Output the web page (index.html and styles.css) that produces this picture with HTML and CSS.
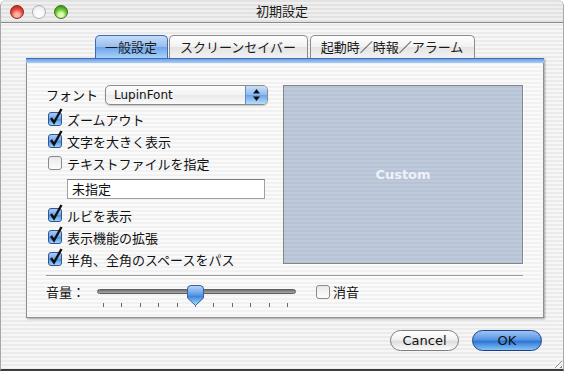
FILE: index.html
```html
<!DOCTYPE html>
<html lang="ja">
<head>
  <meta charset="UTF-8" />
  <title>初期設定</title>
  <link rel="stylesheet" href="styles.css">
</head>
<body>
  <div class="window">
    <div class="titlebar">
      <div class="lights">
        <span class="light close"></span>
        <span class="light mini"></span>
        <span class="light zoom"></span>
      </div>
      <div class="title">初期設定</div>
      <div></div>
    </div>

    <div class="content">
      <div class="tabs">
        <div class="tab tab-general active">一般設定</div>
        <div class="tab tab-saver">スクリーンセイバー</div>
        <div class="tab tab-alarm">起動時／時報／アラーム</div>
      </div>

      <div class="panel">
        <div class="panel-bar"></div>
        <div class="panel-body">
          <div class="panel-main">
            <div class="options">
              <div class="font-row">
                <span class="font-label">フォント</span>
                <div class="popup">
                  <span class="popup-text">LupinFont</span>
                  <span class="stepper">
                    <svg width="9" height="14" viewBox="0 0 9 14">
                      <path d="M4.5 1 L8 5.5 L1 5.5 Z" fill="#111"/>
                      <path d="M4.5 13 L8 8.5 L1 8.5 Z" fill="#111"/>
                    </svg>
                  </span>
                </div>
              </div>

              <label class="row"><span class="check on"><svg width="14" height="17" viewBox="0 0 14 17"><path d="M2 10 L5 14.5 L12.5 1" fill="none" stroke="#111" stroke-width="2.4"/></svg></span>ズームアウト</label>
              <label class="row"><span class="check on"><svg width="14" height="17" viewBox="0 0 14 17"><path d="M2 10 L5 14.5 L12.5 1" fill="none" stroke="#111" stroke-width="2.4"/></svg></span>文字を大きく表示</label>
              <label class="row"><span class="check"></span>テキストファイルを指定</label>

              <div class="field">未指定</div>

              <label class="row"><span class="check on"><svg width="14" height="17" viewBox="0 0 14 17"><path d="M2 10 L5 14.5 L12.5 1" fill="none" stroke="#111" stroke-width="2.4"/></svg></span>ルビを表示</label>
              <label class="row"><span class="check on"><svg width="14" height="17" viewBox="0 0 14 17"><path d="M2 10 L5 14.5 L12.5 1" fill="none" stroke="#111" stroke-width="2.4"/></svg></span>表示機能の拡張</label>
              <label class="row"><span class="check on"><svg width="14" height="17" viewBox="0 0 14 17"><path d="M2 10 L5 14.5 L12.5 1" fill="none" stroke="#111" stroke-width="2.4"/></svg></span>半角、全角のスペースをパス</label>
            </div>

            <div class="preview">Custom</div>
          </div>

          <div class="separator"></div>

          <div class="volume">
            <span class="volume-label">音量：</span>
            <div class="slider">
              <div class="track"></div>
              <svg class="thumb" width="17" height="21" viewBox="0 0 17 21">
                <defs>
                  <linearGradient id="thumbFill" x1="0" y1="0" x2="0" y2="1">
                    <stop offset="0" stop-color="#b9d8f8"/>
                    <stop offset="0.45" stop-color="#5d9be4"/>
                    <stop offset="0.55" stop-color="#3f86dc"/>
                    <stop offset="1" stop-color="#a6e4fb"/>
                  </linearGradient>
                </defs>
                <path d="M4 0.5 H13 Q16.5 0.5 16.5 4 V13 L8.5 20.5 L0.5 13 V4 Q0.5 0.5 4 0.5 Z" fill="url(#thumbFill)" stroke="#3a5f9c"/>
              </svg>
              <div class="ticks">
                <span></span><span></span><span></span><span></span><span></span><span></span>
                <span></span><span></span><span></span><span></span><span></span>
              </div>
            </div>
            <label class="mute"><span class="check"></span>消音</label>
          </div>
        </div>
      </div>

      <div class="buttons">
        <button class="btn cancel">Cancel</button>
        <button class="btn ok">OK</button>
      </div>
    </div>

    <div class="grip"></div>
  </div>
</body>
</html>
```

FILE: styles.css
```css
body {
  margin: 0;
  padding: 0;
  background: #fff;
  font-family: "Noto Sans CJK JP", sans-serif;
  font-size: 13px;
  color: #111;
}

.window {
  width: 564px;
  height: 371px;
  box-sizing: border-box;
  border-left: 1px solid #a8a8a8;
  border-right: 1px solid #a8a8a8;
  border-bottom: 2px solid #3c3c3c;
  border-radius: 6px 6px 0 0;
  overflow: hidden;
  position: relative;
  background: repeating-linear-gradient(to bottom, #ebebeb 0 2px, #f6f6f6 2px 4px);
}

/* title bar */
.titlebar {
  height: 22px;
  border-bottom: 1px solid #8a8a8a;
  display: grid;
  grid-template-columns: 1fr auto 1fr;
  align-items: center;
  background: repeating-linear-gradient(to bottom, #e2e2e2 0 2px, #efefef 2px 4px);
}

.lights {
  display: flex;
  gap: 8px;
  padding-left: 9px;
  padding-top: 2px;
}

.light {
  width: 14px;
  height: 14px;
  border-radius: 50%;
  box-sizing: border-box;
}

.light.close {
  background: radial-gradient(circle at 50% 75%, #ffb3a8 0 20%, #e5453a 55%, #b01a12 100%);
  border: 1px solid #8b2a22;
}

.light.mini {
  background: radial-gradient(circle at 50% 70%, #fbfbfb 0 30%, #e2e4e8 100%);
  border: 1px solid #a9adb5;
}

.light.zoom {
  background: radial-gradient(circle at 50% 75%, #d8ffb0 0 20%, #63c12c 55%, #2f7d12 100%);
  border: 1px solid #3e6f22;
}

.title {
  font-size: 13px;
  line-height: 22px;
  color: #1a1a1a;
}

/* content */
.content {
  padding: 12px 20px 0 25px;
}

.tabs {
  display: flex;
  justify-content: center;
  gap: 1px;
  height: 23px;
}

.tab {
  box-sizing: border-box;
  height: 23px;
  border: 1px solid #8c8c8c;
  border-bottom: none;
  border-radius: 5px 5px 0 0;
  background: linear-gradient(#fefefe, #f1f1f1 50%, #e3e3e3 51%, #f2f2f2);
  text-align: center;
  line-height: 22px;
  color: #1a1a1a;
}

.tab-general { width: 73px; }
.tab-saver { width: 139px; margin-right: 1px; }
.tab-alarm { width: 165px; }

.tab.active {
  border-color: #3f69b5;
  background: linear-gradient(#c6dcf8, #98bff0 48%, #6fa5ea 52%, #a9d2f8);
}

.panel {
  box-sizing: border-box;
  width: 518px;
  height: 260px;
  border: 1px solid #8f8f8f;
  border-top: none;
  background: repeating-linear-gradient(to bottom, #f1f1f1 0 2px, #fafafa 2px 4px);
  box-shadow: 1px 1px 2px rgba(0, 0, 0, 0.35);
}

.panel-bar {
  height: 4px;
  margin: 0 -1px;
  border-top: 1px solid #3f6dbd;
  background: linear-gradient(#6e9fe6, #a9cdf6);
}

.panel-body {
  padding: 22px 19px 0 19px;
}

.panel-main {
  display: flex;
  gap: 15px;
  height: 185px;
}

.options {
  width: 222px;
  display: flex;
  flex-direction: column;
}

.font-row {
  display: flex;
  align-items: center;
  height: 20px;
  margin-bottom: 3px;
}

.font-label {
  width: 59px;
  line-height: 20px;
}

.popup {
  box-sizing: border-box;
  width: 163px;
  height: 20px;
  border: 1px solid #8a8a8a;
  border-radius: 5px;
  display: flex;
  overflow: hidden;
  background: linear-gradient(#fdfdfd, #f2f2f2 50%, #e9e9e9 51%, #fafafa);
  box-shadow: 0 1px 1px rgba(0, 0, 0, 0.2);
}

.popup-text {
  flex: 1;
  padding-left: 8px;
  font-family: "DejaVu Sans", sans-serif;
  font-size: 12px;
  line-height: 18px;
}

.stepper {
  width: 21px;
  display: flex;
  align-items: center;
  justify-content: center;
  border-left: 1px solid #5f8acb;
  background: linear-gradient(#c9e0fa, #8ebcf0 48%, #6ba5ea 52%, #b7dcfb);
}

.row {
  display: flex;
  align-items: center;
  height: 22px;
}

.check {
  position: relative;
  box-sizing: border-box;
  width: 14px;
  height: 14px;
  margin: 0 5px 0 2px;
  border: 1px solid #8a8a8a;
  border-radius: 3px;
  background: linear-gradient(#e9e9e9, #fdfdfd);
}

.check.on {
  border-color: #2f5596;
  background: linear-gradient(#a9cbf4, #6ea6ea 50%, #4a8fe3 51%, #9fd3fa);
}

.check svg {
  position: absolute;
  left: 0;
  top: -5px;
}

.field {
  box-sizing: border-box;
  width: 198px;
  height: 20px;
  margin: 5px 0 5px 21px;
  padding-left: 4px;
  border: 1px solid #a0a0a0;
  border-top-color: #7c7c7c;
  background: #fff;
  line-height: 18px;
}

.preview {
  box-sizing: border-box;
  width: 240px;
  height: 179px;
  border: 1px solid #858585;
  box-shadow: 1px 1px 0 #fff;
  background: repeating-linear-gradient(to bottom, #b6c2d5 0 2px, #bfc9da 2px 4px);
  display: flex;
  align-items: center;
  justify-content: center;
  font-family: "DejaVu Sans", sans-serif;
  font-weight: bold;
  font-size: 13px;
  color: #eef2f8;
}

.separator {
  height: 1px;
  margin-top: 5px;
  width: 477px;
  background: #9a9a9a;
  border-bottom: 1px solid #fff;
}

.volume {
  display: flex;
  align-items: flex-start;
  height: 40px;
  padding-top: 7px;
  box-sizing: border-box;
}

.volume-label {
  line-height: 16px;
  width: 39px;
}

.slider {
  position: relative;
  width: 199px;
  height: 24px;
  margin-left: 12px;
}

.track {
  margin-top: 5px;
  height: 5px;
  box-sizing: border-box;
  border: 1px solid #5e5e5e;
  border-radius: 3px;
  background: linear-gradient(#6f6f6f, #a9a9a9);
}

.thumb {
  position: absolute;
  left: 90px;
  top: 1px;
}

.ticks {
  display: flex;
  justify-content: space-between;
  padding: 0 8px 0 6px;
  margin-top: 9px;
}

.ticks span {
  width: 1px;
  height: 4px;
  background: #6a6a6a;
}

.mute {
  display: flex;
  align-items: center;
  margin-left: 18px;
  line-height: 16px;
}

.mute .check {
  margin-right: 3px;
}

.buttons {
  display: flex;
  justify-content: flex-end;
  gap: 13px;
  margin-top: 12px;
  padding-right: 1px;
}

.btn {
  box-sizing: border-box;
  height: 21px;
  border-radius: 11px;
  font-family: "DejaVu Sans", sans-serif;
  font-size: 13px;
  padding: 0;
  color: #111;
}

.btn.cancel {
  width: 69px;
  border: 1px solid #7d7d7d;
  background: linear-gradient(#ffffff, #f1f1f1 45%, #dedede 55%, #fbfbfb);
}

.btn.ok {
  width: 70px;
  border: 1px solid #1f3f85;
  background: linear-gradient(#9ec4f3, #5a96e4 45%, #2f76d6 55%, #85c4f7);
}

.grip {
  position: absolute;
  right: 1px;
  bottom: 1px;
  width: 11px;
  height: 11px;
  background: repeating-linear-gradient(135deg, transparent 0 2px, #8a8a8a 2px 3px, #fff 3px 4px);
  clip-path: polygon(100% 0, 100% 100%, 0 100%);
}
```
